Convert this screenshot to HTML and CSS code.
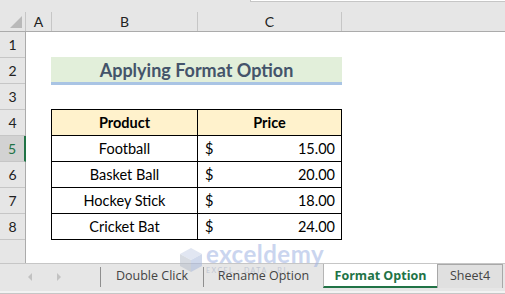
FILE: index.html
```html
<!DOCTYPE html>
<html lang="en">
<head>
    <meta charset="UTF-8">
    <title>Applying Format Option</title>
    <link rel="stylesheet" href="styles.css">
</head>
<body>
    <div class="app">
        <div class="formula-edge"><div class="formula-box"></div></div>

        <div class="colheads">
            <div class="corner"><span class="tri"></span></div>
            <div class="ch col-a">A</div>
            <div class="ch col-b">B</div>
            <div class="ch col-c">C</div>
            <div class="ch col-rest"></div>
        </div>

        <div class="sheet">
            <div class="rowheads">
                <div class="rh">1</div>
                <div class="rh">2</div>
                <div class="rh">3</div>
                <div class="rh">4</div>
                <div class="rh active">5</div>
                <div class="rh">6</div>
                <div class="rh">7</div>
                <div class="rh">8</div>
                <div class="rh last"></div>
            </div>

            <div class="cells">
                <div class="title">Applying Format Option</div>

                <div class="tbl">
                    <div class="c head left">Product</div>
                    <div class="c head">Price</div>

                    <div class="c left">Football</div>
                    <div class="c price"><span>$</span><span>15.00</span></div>

                    <div class="c left">Basket Ball</div>
                    <div class="c price"><span>$</span><span>20.00</span></div>

                    <div class="c left">Hockey Stick</div>
                    <div class="c price"><span>$</span><span>18.00</span></div>

                    <div class="c left end">Cricket Bat</div>
                    <div class="c price end"><span>$</span><span>24.00</span></div>
                </div>
            </div>
        </div>

        <div class="tabs">
            <div class="tabrow">
                <div class="nav">
                    <span class="arrow prev"></span>
                    <span class="arrow next"></span>
                </div>
                <div class="sep"></div>
                <div class="tab t-double">Double Click</div>
                <div class="sep"></div>
                <div class="tab t-rename">Rename Option</div>
                <div class="tab t-format">Format Option</div>
                <div class="tab t-sheet4">Sheet4</div>
            </div>
            <div class="tabfoot"></div>
        </div>

        <!-- watermark -->
        <div class="watermark">
            <svg width="24" height="26" viewBox="0 0 24 26">
                <polygon points="12,1 23,7 12,13 1,7" fill="#c9d3e8"/>
                <polygon points="1,7 12,13 12,25 1,19" fill="#b8bfcc"/>
                <polygon points="23,7 12,13 12,25 23,19" fill="#a9b9dc"/>
            </svg>
            <div class="wm-text">
                <div class="wm-name">exceldemy</div>
                <div class="wm-sub">EXCEL · DATA · BI</div>
            </div>
        </div>
    </div>
</body>
</html>
```

FILE: styles.css
```css
* {
    margin: 0;
    padding: 0;
    box-sizing: border-box;
}

body {
    font-family: 'Lato', 'Liberation Sans', sans-serif;
    background: #fff;
    color: #000;
}

.app {
    position: relative;
    width: 505px;
    height: 294px;
    overflow: hidden;
}

/* Formula bar remnant */
.formula-edge {
    height: 12px;
    background: #e6e6e6;
}

.formula-box {
    margin-left: 250px;
    height: 2px;
    background: #fff;
    border-left: 1px solid #c6c6c6;
    border-bottom: 1px solid #c6c6c6;
}

/* Column headers */
.colheads {
    display: flex;
    height: 20px;
    background: #e6e6e6;
    border-bottom: 1px solid #ababab;
}

.corner {
    width: 26px;
    border-right: 1px solid #c6c6c6;
    position: relative;
}

.tri {
    position: absolute;
    right: 3px;
    bottom: 3px;
    width: 0;
    height: 0;
    border-left: 12px solid transparent;
    border-bottom: 12px solid #b9b9b9;
}

.ch {
    border-right: 1px solid #c6c6c6;
    font-size: 14px;
    color: #222;
    text-align: center;
    line-height: 19px;
}

.col-a { width: 26px; }
.col-b { width: 146px; }
.col-c { width: 144px; }
.col-rest { flex: 1; border-right: none; }

/* Sheet body */
.sheet {
    display: flex;
    height: 231px;
}

.rowheads {
    width: 26px;
    background: #e6e6e6;
    border-right: 1px solid #ababab;
}

.rh {
    height: 26px;
    border-bottom: 1px solid #c6c6c6;
    font-size: 14px;
    color: #222;
    text-align: center;
    line-height: 26px;
}

.rh.active {
    background: #d2d2d2;
    color: #217346;
    border-right: 2px solid #217346;
    margin-right: -1px;
}

.rh.last {
    border-bottom: none;
}

.cells {
    flex: 1;
    padding-top: 25px;
    padding-left: 25px;
}

.title {
    width: 291px;
    height: 28px;
    background: #e2efda;
    border-bottom: 3px solid #a9c4e4;
    color: #44546a;
    font-weight: bold;
    font-size: 18px;
    text-align: center;
    line-height: 26px;
}

.tbl {
    margin-top: 24px;
    width: 291px;
    display: grid;
    grid-template-columns: 146px 143px;
    border: 1px solid #000;
}

.c {
    height: 26px;
    border-bottom: 1px solid #000;
    font-size: 14.5px;
    line-height: 25px;
    text-align: center;
}

.c.left {
    border-right: 1px solid #000;
}

.c.end {
    height: 25px;
    border-bottom: none;
}

.c.head {
    background: #fff2cc;
    font-weight: bold;
}

.price {
    display: flex;
    justify-content: space-between;
    padding: 0 6px 0 7px;
}

/* Sheet tabs */
.tabs {
    height: 31px;
    background: #e6e6e6;
    border-top: 1px solid #c6c6c6;
}

.tabrow {
    display: flex;
    height: 24px;
    font-family: 'Open Sans', 'Liberation Sans', sans-serif;
    font-size: 12.5px;
    color: #444;
}

.nav {
    width: 100px;
    position: relative;
}

.arrow {
    position: absolute;
    top: 9px;
    width: 0;
    height: 0;
    border-top: 4px solid transparent;
    border-bottom: 4px solid transparent;
}

.arrow.prev {
    left: 28px;
    border-right: 4px solid #c2c2c2;
}

.arrow.next {
    left: 57px;
    border-left: 4px solid #c2c2c2;
}

.sep {
    width: 1px;
    height: 20px;
    margin-top: 3px;
    background: #8f8f8f;
}

.tab {
    text-align: center;
    line-height: 23px;
}

.t-double { width: 102px; }
.t-rename { width: 119px; }

.t-format {
    width: 114px;
    background: #fff;
    border-left: 1px solid #b5b5b5;
    border-bottom: 2px solid #217346;
    color: #217346;
    font-weight: bold;
}

.t-sheet4 {
    width: 66px;
    background: #e0e0e0;
    border: 1px solid #a8a8a8;
    border-bottom: none;
    line-height: 22px;
}

.tabfoot {
    height: 6px;
    border-top: 3px solid #e6e6e6;
    border-bottom: 1px solid #c6c6c6;
    background: #f3f3f3;
}

/* Watermark over grid */
.watermark {
    position: absolute;
    left: 179px;
    top: 244px;
    display: flex;
    gap: 3px;
    opacity: 0.55;
    pointer-events: none;
}

.watermark svg {
    margin-top: 3px;
}

.wm-name {
    font-family: 'Lato', sans-serif;
    font-weight: bold;
    font-size: 24px;
    line-height: 20px;
    color: #9fb3e2;
    letter-spacing: 0.5px;
}

.wm-sub {
    font-size: 7px;
    color: #a3adc4;
    letter-spacing: 1.5px;
    margin-top: 2px;
}
```
